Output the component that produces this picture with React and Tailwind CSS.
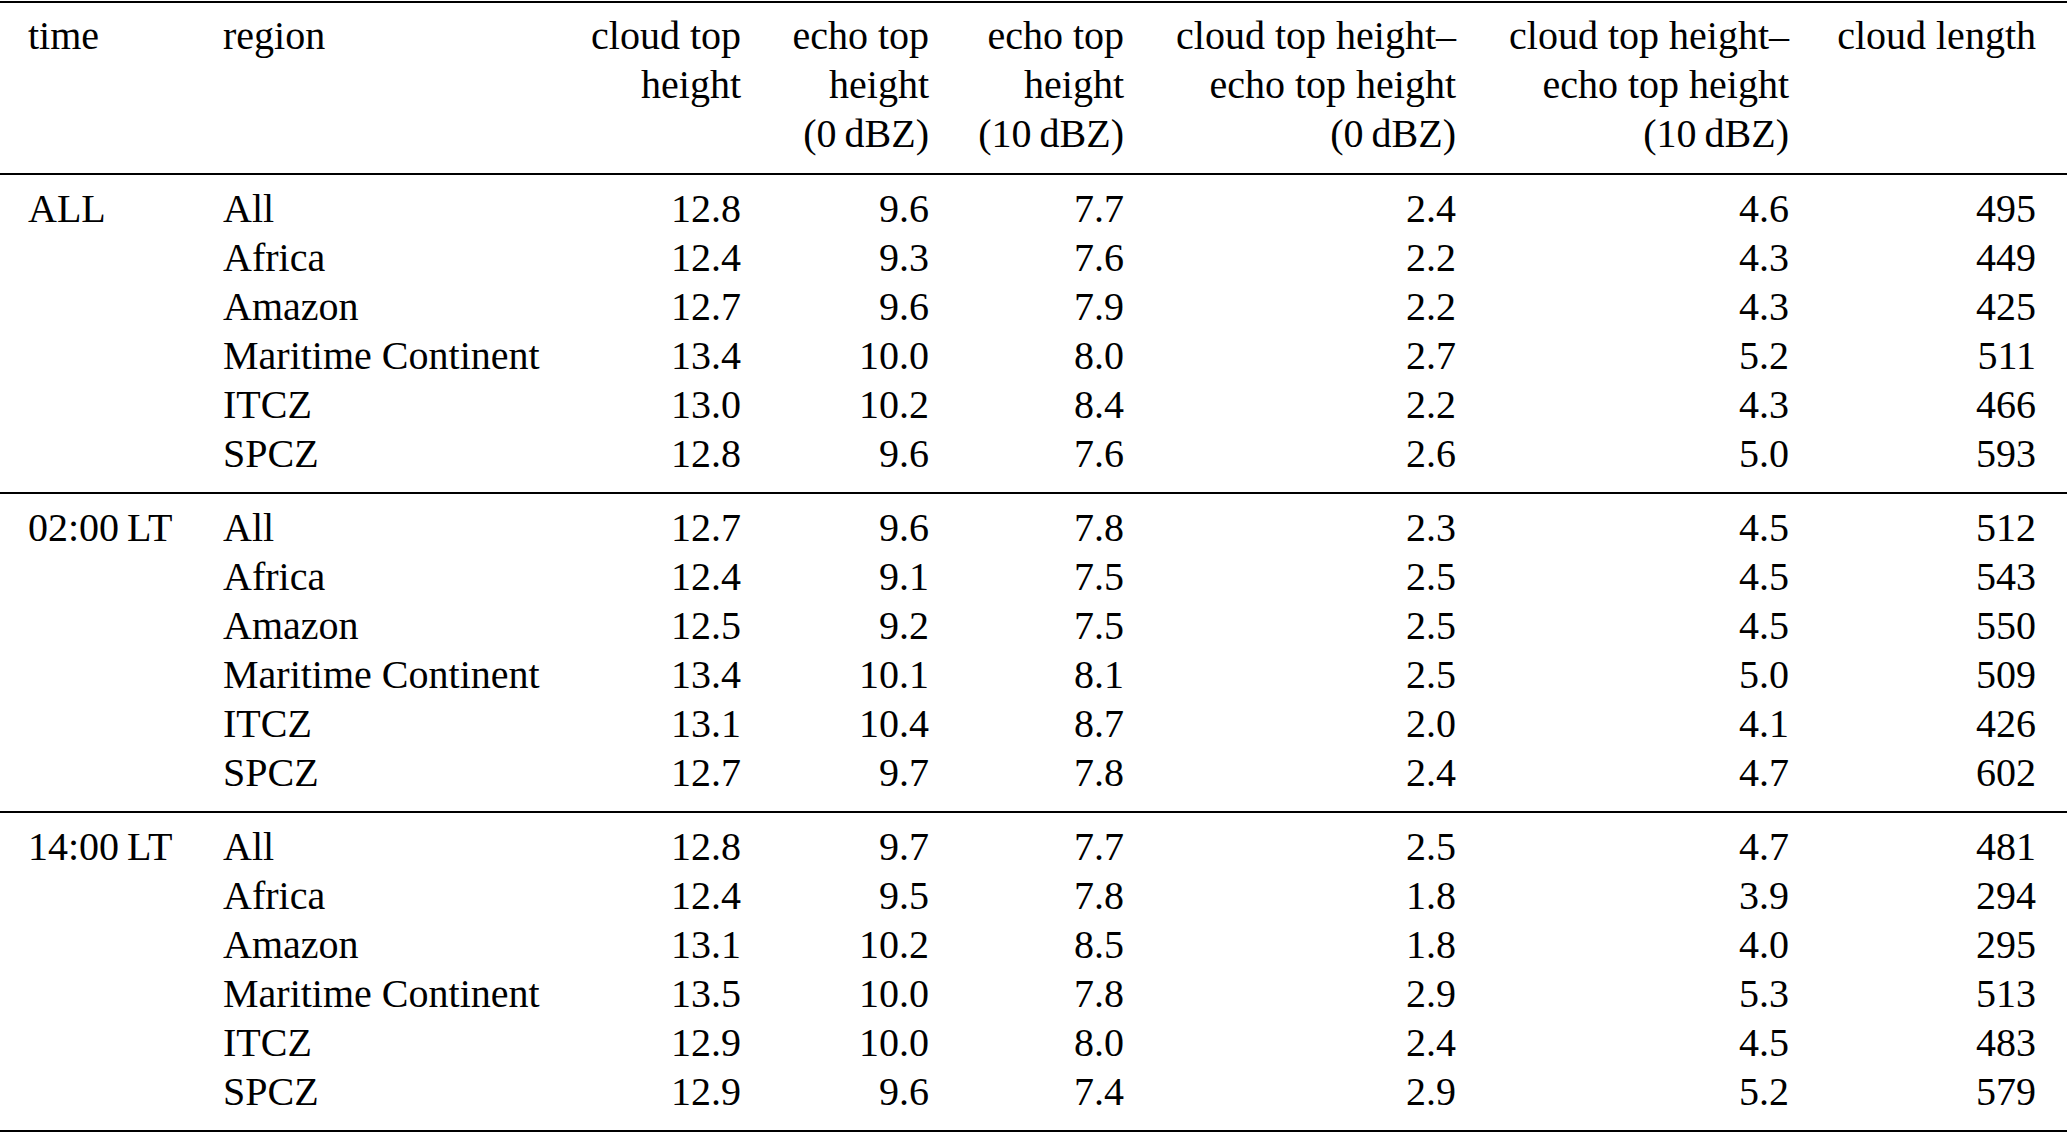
import React from 'react';

// Column layout: time | region | six numeric columns (right aligned)
const cols =
  'grid grid-cols-[195px_338px_180px_188px_195px_332px_333px_247px] pl-[28px] pr-[31px]';

const header = [
  ['time'],
  ['region'],
  ['cloud top', 'height'],
  ['echo top', 'height', '(0\u2009dBZ)'],
  ['echo top', 'height', '(10\u2009dBZ)'],
  ['cloud top height\u2013', 'echo top height', '(0\u2009dBZ)'],
  ['cloud top height\u2013', 'echo top height', '(10\u2009dBZ)'],
  ['cloud length'],
];

const groups = [
  {
    time: 'ALL',
    rows: [
      ['All', '12.8', '9.6', '7.7', '2.4', '4.6', '495'],
      ['Africa', '12.4', '9.3', '7.6', '2.2', '4.3', '449'],
      ['Amazon', '12.7', '9.6', '7.9', '2.2', '4.3', '425'],
      ['Maritime Continent', '13.4', '10.0', '8.0', '2.7', '5.2', '511'],
      ['ITCZ', '13.0', '10.2', '8.4', '2.2', '4.3', '466'],
      ['SPCZ', '12.8', '9.6', '7.6', '2.6', '5.0', '593'],
    ],
  },
  {
    time: '02:00\u2009LT',
    rows: [
      ['All', '12.7', '9.6', '7.8', '2.3', '4.5', '512'],
      ['Africa', '12.4', '9.1', '7.5', '2.5', '4.5', '543'],
      ['Amazon', '12.5', '9.2', '7.5', '2.5', '4.5', '550'],
      ['Maritime Continent', '13.4', '10.1', '8.1', '2.5', '5.0', '509'],
      ['ITCZ', '13.1', '10.4', '8.7', '2.0', '4.1', '426'],
      ['SPCZ', '12.7', '9.7', '7.8', '2.4', '4.7', '602'],
    ],
  },
  {
    time: '14:00\u2009LT',
    rows: [
      ['All', '12.8', '9.7', '7.7', '2.5', '4.7', '481'],
      ['Africa', '12.4', '9.5', '7.8', '1.8', '3.9', '294'],
      ['Amazon', '13.1', '10.2', '8.5', '1.8', '4.0', '295'],
      ['Maritime Continent', '13.5', '10.0', '7.8', '2.9', '5.3', '513'],
      ['ITCZ', '12.9', '10.0', '8.0', '2.4', '4.5', '483'],
      ['SPCZ', '12.9', '9.6', '7.4', '2.9', '5.2', '579'],
    ],
  },
];

export default function App() {
  return (
    <div
      className="w-[2067px] h-[1133px] bg-white text-black text-[40px] leading-[49px] overflow-hidden"
      style={{ fontFamily: '"Liberation Serif", "Times New Roman", serif' }}
    >
      <div className="mt-[1px] border-t-2 border-b-2 border-black">
        {/* Header */}
        <div className={`${cols} pt-[8px] pb-[15px]`}>
          {header.map((lines, i) => (
            <div key={i} className={i < 2 ? 'text-left' : 'text-right'}>
              {lines.map((l, j) => (
                <div key={j} className="whitespace-nowrap">
                  {l}
                </div>
              ))}
            </div>
          ))}
        </div>

        {/* Body groups */}
        {groups.map((g) => (
          <div key={g.time} className="border-t-2 border-black pt-[9px] pb-[14px]">
            {g.rows.map((r, ri) => (
              <div key={ri} className={cols}>
                <div className="whitespace-nowrap">{ri === 0 ? g.time : ''}</div>
                <div className="whitespace-nowrap">{r[0]}</div>
                {r.slice(1).map((v, vi) => (
                  <div key={vi} className="text-right">
                    {v}
                  </div>
                ))}
              </div>
            ))}
          </div>
        ))}
      </div>
    </div>
  );
}
